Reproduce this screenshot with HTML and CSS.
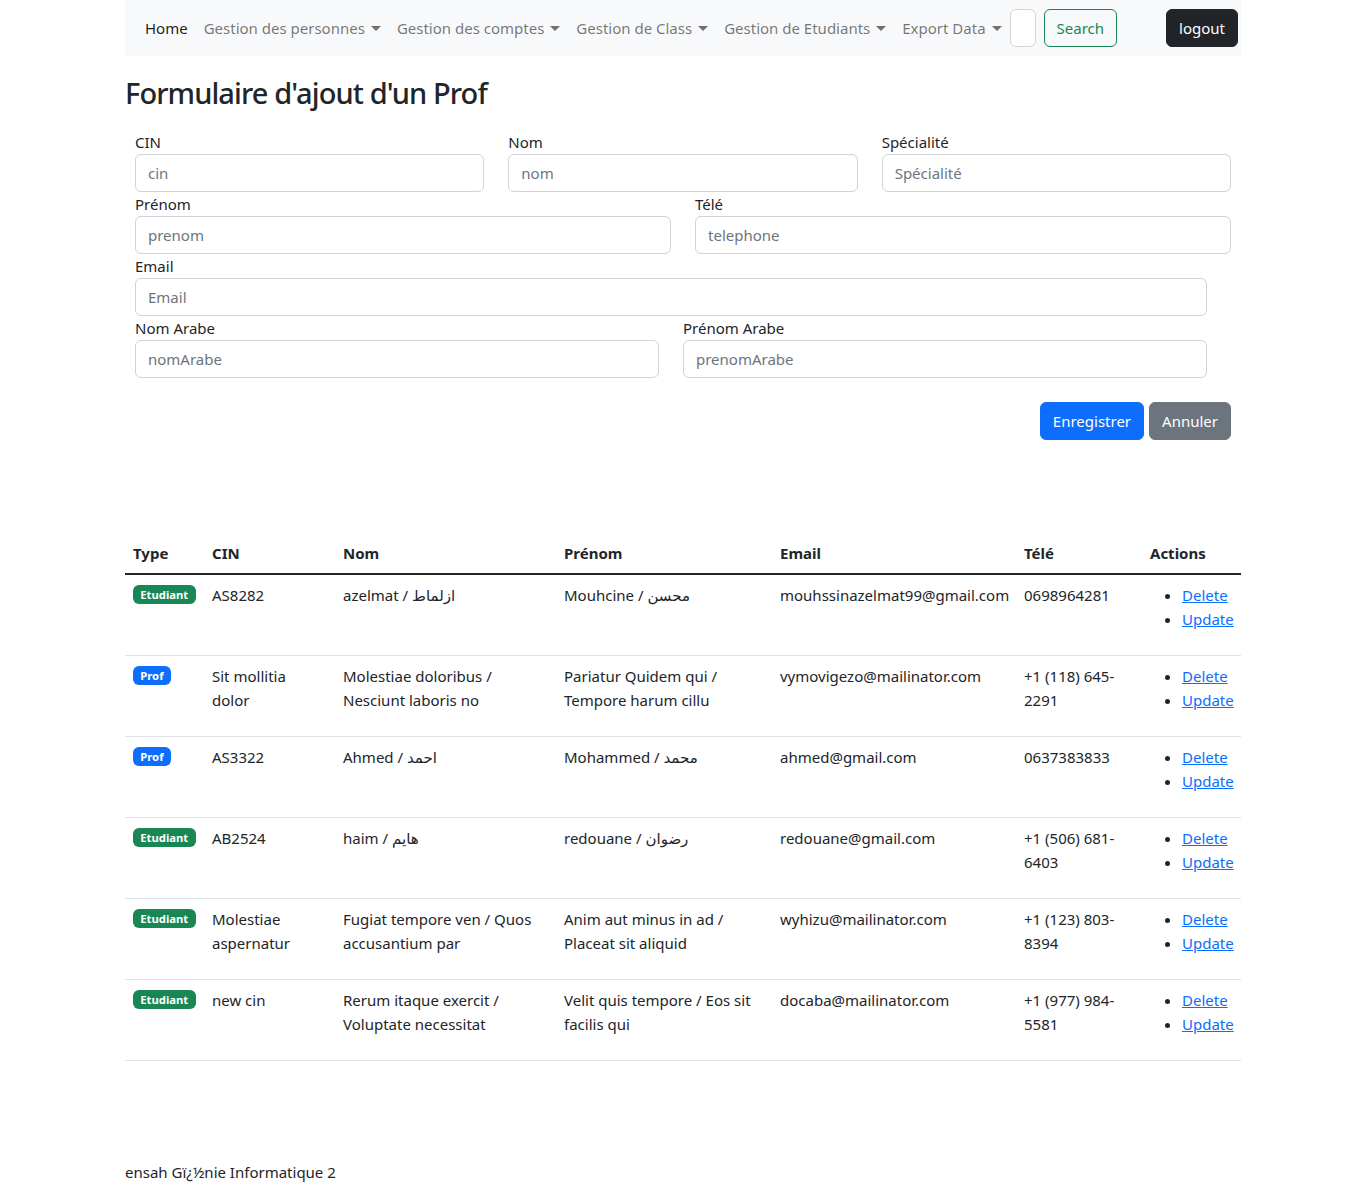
FILE: index.html
```html
<!doctype html>
<html lang="fr">
<head>
<meta charset="utf-8">
<title>Gestion des Profs</title>
<link rel="stylesheet" href="styles.css">
</head>
<body>
<div class="container">

	<nav class="navbar">
		<ul class="nav-links">
			<li><a class="nav-link active" href="#">Home</a></li>
			<li><a class="nav-link dropdown" href="#">Gestion des personnes</a></li>
			<li><a class="nav-link dropdown" href="#">Gestion des comptes</a></li>
			<li><a class="nav-link dropdown" href="#">Gestion de Class</a></li>
			<li><a class="nav-link dropdown" href="#">Gestion de Etudiants</a></li>
			<li><a class="nav-link dropdown" href="#">Export Data</a></li>
		</ul>
		<form class="search-form">
			<input class="search-input" type="search" aria-label="Search">
			<button class="btn btn-outline-success" type="button">Search</button>
		</form>
		<button class="btn btn-dark logout" type="button">logout</button>
	</nav>

	<h2 class="page-title">Formulaire d'ajout d'un Prof</h2>

	<form class="prof-form">
		<div class="row cols-3">
			<div class="field">
				<label for="cin">CIN</label>
				<input class="form-control" id="cin" placeholder="cin">
			</div>
			<div class="field">
				<label for="nom">Nom</label>
				<input class="form-control" id="nom" placeholder="nom">
			</div>
			<div class="field">
				<label for="specialite">Spécialité</label>
				<input class="form-control" id="specialite" placeholder="Spécialité">
			</div>
		</div>
		<div class="row cols-2">
			<div class="field">
				<label for="prenom">Prénom</label>
				<input class="form-control" id="prenom" placeholder="prenom">
			</div>
			<div class="field">
				<label for="tele">Télé</label>
				<input class="form-control" id="tele" placeholder="telephone">
			</div>
		</div>
		<div class="row narrow">
			<div class="field">
				<label for="email">Email</label>
				<input class="form-control" id="email" placeholder="Email">
			</div>
		</div>
		<div class="row cols-2 narrow">
			<div class="field">
				<label for="nomArabe">Nom Arabe</label>
				<input class="form-control" id="nomArabe" placeholder="nomArabe">
			</div>
			<div class="field">
				<label for="prenomArabe">Prénom Arabe</label>
				<input class="form-control" id="prenomArabe" placeholder="prenomArabe">
			</div>
		</div>
		<div class="form-actions">
			<button class="btn btn-primary" type="submit">Enregistrer</button>
			<button class="btn btn-secondary" type="reset">Annuler</button>
		</div>
	</form>

	<table class="table">
		<colgroup>
			<col style="width:79px"><col style="width:131px"><col style="width:221px">
			<col style="width:216px"><col style="width:244px"><col style="width:126px"><col style="width:99px">
		</colgroup>
		<thead>
			<tr>
				<th>Type</th><th>CIN</th><th>Nom</th><th>Prénom</th><th>Email</th><th>Télé</th><th>Actions</th>
			</tr>
		</thead>
		<tbody>
			<tr>
				<td><span class="badge bg-success">Etudiant</span></td>
				<td>AS8282</td>
				<td>azelmat / ازلماط</td>
				<td>Mouhcine / محسن</td>
				<td>mouhssinazelmat99@gmail.com</td>
				<td>0698964281</td>
				<td><ul class="actions"><li><a href="#">Delete</a></li><li><a href="#">Update</a></li></ul></td>
			</tr>
			<tr>
				<td><span class="badge bg-primary">Prof</span></td>
				<td>Sit mollitia dolor</td>
				<td>Molestiae doloribus / Nesciunt laboris no</td>
				<td>Pariatur Quidem qui / Tempore harum cillu</td>
				<td>vymovigezo@mailinator.com</td>
				<td>+1 (118) 645-2291</td>
				<td><ul class="actions"><li><a href="#">Delete</a></li><li><a href="#">Update</a></li></ul></td>
			</tr>
			<tr>
				<td><span class="badge bg-primary">Prof</span></td>
				<td>AS3322</td>
				<td>Ahmed / احمد</td>
				<td>Mohammed / محمد</td>
				<td>ahmed@gmail.com</td>
				<td>0637383833</td>
				<td><ul class="actions"><li><a href="#">Delete</a></li><li><a href="#">Update</a></li></ul></td>
			</tr>
			<tr>
				<td><span class="badge bg-success">Etudiant</span></td>
				<td>AB2524</td>
				<td>haim / هايم</td>
				<td>redouane / رضوان</td>
				<td>redouane@gmail.com</td>
				<td>+1 (506) 681-6403</td>
				<td><ul class="actions"><li><a href="#">Delete</a></li><li><a href="#">Update</a></li></ul></td>
			</tr>
			<tr>
				<td><span class="badge bg-success">Etudiant</span></td>
				<td>Molestiae aspernatur</td>
				<td>Fugiat tempore ven / Quos accusantium par</td>
				<td>Anim aut minus in ad / Placeat sit aliquid</td>
				<td>wyhizu@mailinator.com</td>
				<td>+1 (123) 803-8394</td>
				<td><ul class="actions"><li><a href="#">Delete</a></li><li><a href="#">Update</a></li></ul></td>
			</tr>
			<tr>
				<td><span class="badge bg-success">Etudiant</span></td>
				<td>new cin</td>
				<td>Rerum itaque exercit / Voluptate necessitat</td>
				<td>Velit quis tempore / Eos sit facilis qui</td>
				<td>docaba@mailinator.com</td>
				<td>+1 (977) 984-5581</td>
				<td><ul class="actions"><li><a href="#">Delete</a></li><li><a href="#">Update</a></li></ul></td>
			</tr>
		</tbody>
	</table>

	<footer class="footer">ensah Gï¿½nie Informatique 2</footer>
</div>
</body>
</html>
```

FILE: styles.css
```css
* {
	box-sizing: border-box;
}

body {
	margin: 0;
	font-family: "Noto Sans", "DejaVu Sans", sans-serif;
	font-size: 15px;
	line-height: 24px;
	color: #212529;
	background: #fff;
}

.container {
	width: 1140px;
	margin: 0 auto;
	padding: 0 12px;
}

/* top bar */
.navbar {
	display: flex;
	align-items: center;
	height: 56px;
	padding: 0 3px 0 12px;
	background-color: #f8f9fa;
}

.nav-links {
	display: flex;
	margin: 0;
	padding: 0;
	list-style: none;
}

.nav-link {
	display: block;
	padding: 8px;
	color: rgba(0, 0, 0, 0.55);
	text-decoration: none;
}
.nav-link.active {
	color: rgba(0, 0, 0, 0.9);
}
.nav-link.dropdown::after {
	content: "";
	display: inline-block;
	margin-left: 6px;
	vertical-align: 3px;
	border-top: 5px solid;
	border-right: 5px solid transparent;
	border-left: 5px solid transparent;
}

.search-form {
	display: flex;
	margin-left: 0;
}

.search-input {
	width: 26px;
	height: 38px;
	margin-right: 8px;
	border: 1px solid #ced4da;
	border-radius: 6px;
	background: #fff;
}

.btn {
	display: inline-block;
	height: 38px;
	padding: 6px 12px;
	font-family: inherit;
	font-size: 15px;
	line-height: 24px;
	border: 1px solid transparent;
	border-radius: 6px;
	cursor: pointer;
}
.btn-outline-success {
	color: #198754;
	border-color: #198754;
	background: transparent;
}
.btn-dark {
	color: #fff;
	background: #212529;
	border-color: #212529;
}
.btn-primary {
	color: #fff;
	background: #0d6efd;
	border-color: #0d6efd;
}
.btn-secondary {
	color: #fff;
	background: #6c757d;
	border-color: #6c757d;
}

.logout {
	margin-left: auto;
}

/* form */
.page-title {
	margin: 18px 0 8px;
	font-size: 29px;
	font-weight: 500;
	line-height: 38px;
	letter-spacing: -0.9px;
}

.prof-form {
	padding: 10px;
}

.row {
	display: grid;
	grid-template-columns: 1fr;
	column-gap: 24px;
}
.row.cols-3 {
	grid-template-columns: repeat(3, 1fr);
}
.row.cols-2 {
	grid-template-columns: repeat(2, 1fr);
}
.row.narrow {
	margin-right: 24px;
}

.field label {
	display: block;
}

.form-control {
	display: block;
	width: 100%;
	height: 38px;
	padding: 6px 12px;
	font-family: inherit;
	font-size: 15px;
	color: #212529;
	border: 1px solid #ced4da;
	border-radius: 6px;
}
.form-control::placeholder {
	color: #6c757d;
}

.form-actions {
	display: flex;
	justify-content: flex-end;
	gap: 5px;
	margin-top: 24px;
}

/* table */
.table {
	width: 100%;
	margin-top: 83px;
	margin-bottom: 16px;
	border-collapse: collapse;
	table-layout: fixed;
}

.table th,
.table td {
	padding: 8px;
	text-align: left;
	vertical-align: top;
	border-bottom: 1px solid #dee2e6;
}
.table th {
	font-weight: 700;
	border-bottom: 2px solid #212529;
}

.badge {
	display: inline-block;
	padding: 0.35em 0.65em;
	font-size: 0.75em;
	font-weight: 700;
	line-height: 1;
	color: #fff;
	border-radius: 6px;
	vertical-align: 2px;
}
.bg-success {
	background: #198754;
}
.bg-primary {
	background: #0d6efd;
}

.actions {
	margin: 0 0 16px;
	padding-left: 32px;
}
.actions a {
	color: #0d6efd;
}

.footer {
	margin-top: 99px;
	padding-bottom: 8px;
}
```
